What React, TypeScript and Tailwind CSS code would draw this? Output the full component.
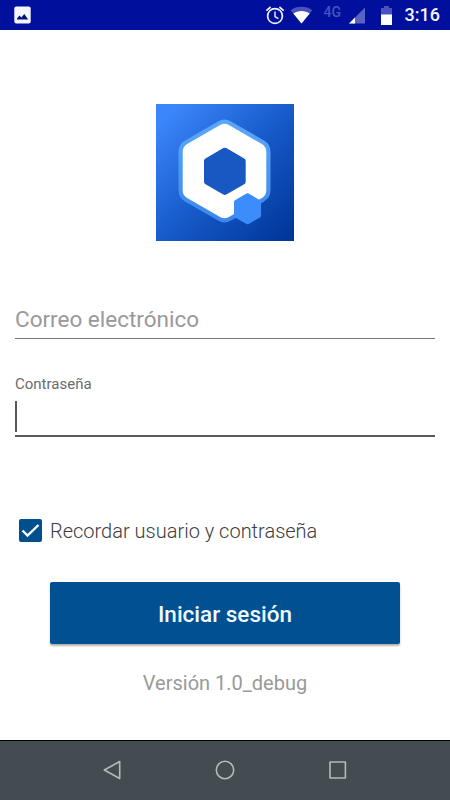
import { useState } from "react";

function StatusBar() {
  return (
    <header className="flex h-[30px] items-center bg-[#000f9c] pl-[14px] pr-[10px]">
      <svg className="h-[18px] w-[17px]" viewBox="0 0 17 18">
        <rect x="0.3" y="0.5" width="16.4" height="17" rx="2" fill="#f4f5ff" />
        <path d="M3 13.5v-1l2.5-3 1.8 2 3-3.5 3.9 5.5z" fill="#000f80" />
      </svg>

      <div className="ml-auto flex items-center">
        {/* Alarm */}
        <svg className="h-5 w-5" viewBox="0 0 20 20" fill="none" stroke="#f1f2ff" strokeWidth="1.7">
          <circle cx="10" cy="11" r="7.4" />
          <path d="M10 6.5v5l3.4 2.2" strokeWidth="1.4" />
          <path d="M1.4 5.6l4.2-3.6M18.6 5.6l-4.2-3.6" />
        </svg>
        {/* Wi-Fi */}
        <svg className="ml-[5px] h-[18px] w-[23px]" viewBox="0 0 23 18">
          <path d="M11.5 17.5L.6 4.2C6.5-.3 16.5-.3 22.4 4.2z" fill="#4a52bf" />
          <path d="M11.5 17.5L3.3 7.5C8 4 15 4 19.7 7.5z" fill="#fff" />
        </svg>
        <span className="ml-[11px] -mt-[7px] w-[20px] text-[14px] font-medium leading-4 text-[#4a52bf]">4G</span>
        {/* Signal */}
        <svg className="ml-[5px] h-[17px] w-4" viewBox="0 0 16 17">
          <path d="M0 16.5L16 .5v16z" fill="#5a62c4" />
          <path d="M0 16.5l6-6v6z" fill="#fff" />
        </svg>
        {/* Battery */}
        <svg className="ml-[16px] h-[19px] w-[11px]" viewBox="0 0 11 19">
          <path d="M0 2h3V0h5v2h3v7H0z" fill="#4a52bf" />
          <path d="M0 8.5h11V19H0z" fill="#fff" />
        </svg>
        <span className="ml-[13px] text-[18px] font-medium leading-5 text-[#f4f5ff]">3:16</span>
      </div>
    </header>
  );
}

function Logo() {
  return (
    <svg className="mx-auto h-[137px] w-[138px]" viewBox="0 0 138 137" strokeLinejoin="round">
      <defs>
        <linearGradient id="tile" x1="0" y1="0" x2="1" y2="1">
          <stop offset="0.08" stopColor="#3b86fa" />
          <stop offset="0.5" stopColor="#185bcb" />
          <stop offset="0.95" stopColor="#00389a" />
        </linearGradient>
        <linearGradient id="rim" gradientUnits="userSpaceOnUse" x1="0" y1="16" x2="0" y2="118">
          <stop stopColor="#5ba8f9" />
          <stop offset="1" stopColor="#3d87ec" />
        </linearGradient>
      </defs>
      <rect width="138" height="137" fill="url(#tile)" />
      <path
        d="M68.5 28.7L101.5 47.7V86.3L68.5 105.3L35.5 86.3V47.7Z"
        fill="url(#rim)"
        stroke="url(#rim)"
        strokeWidth="26"
      />
      <path
        d="M68.5 28.7L101.5 47.7V86.3L68.5 105.3L35.5 86.3V47.7Z"
        fill="#fff"
        stroke="#fff"
        strokeWidth="17.6"
      />
      <path
        d="M68.8 46.7L86.7 57V77.7L68.8 88L51 77.7V57Z"
        fill="#1758c2"
        stroke="#1758c2"
        strokeWidth="6"
      />
      <path
        d="M91.5 91.3L103 97.9V111.7L91.5 118.3L80 111.7V97.9Z"
        fill="#3c8cfb"
        stroke="#3c8cfb"
        strokeWidth="4"
      />
    </svg>
  );
}

function NavigationBar() {
  return (
    <nav className="flex h-[60px] items-center justify-center gap-[93px] border-t border-black bg-[#434c51] pb-[2px]">
      <button aria-label="Atrás">
        <svg className="h-5 w-5" viewBox="0 0 20 20" fill="none" stroke="#b3b9bd" strokeWidth="1.6" strokeLinejoin="round">
          <path d="M2.3 10L17.7 1.5v17z" />
        </svg>
      </button>
      <button aria-label="Inicio">
        <svg className="h-5 w-5" viewBox="0 0 20 20" fill="none" stroke="#b3b9bd" strokeWidth="1.6">
          <circle cx="10" cy="10" r="8.7" />
        </svg>
      </button>
      <button aria-label="Recientes">
        <svg className="h-5 w-5" viewBox="0 0 20 20" fill="none" stroke="#b3b9bd" strokeWidth="1.6" strokeLinejoin="round">
          <rect x="2" y="2" width="15.4" height="16" />
        </svg>
      </button>
    </nav>
  );
}

export default function App() {
  const [remember, setRemember] = useState(true);

  return (
    <div className="flex h-[800px] w-[450px] flex-col overflow-hidden bg-white font-['Roboto',sans-serif]">
      <StatusBar />

      <main className="flex flex-1 flex-col px-[15px] pt-[74px]">
        <Logo />

        <div className="mt-[61px] flex h-[37px] items-center border-b border-[#777] pb-[2px]">
          <span className="text-[22.5px] leading-8 text-[#999]">Correo electrónico</span>
        </div>

        <label className="mt-[35px] text-[15px] leading-5 text-[#6b6b6b]">Contraseña</label>
        <div className="mt-[7px] h-[36px] border-b-2 border-[#5c5759]">
          <div className="h-[31px] w-[2px] bg-[#57575a]" />
        </div>

        <button
          className="mt-[78px] flex h-[32px] items-center pl-[4px] text-left"
          onClick={() => setRemember(!remember)}
        >
          <svg className="mb-px h-[23px] w-[23px]" viewBox="0 0 23 23">
            <rect width="23" height="23" rx="2" fill="#00508f" />
            {remember && <path d="M3.5 11.5l5 5L19.5 6" fill="none" stroke="#fff" strokeWidth="2.4" />}
          </svg>
          <span className="ml-[8px] text-[20px] font-light leading-8 text-[#3c3c3c]">Recordar usuario y contraseña</span>
        </button>

        <button className="mx-[35px] mt-[35px] h-[62px] rounded-[2px] bg-[#005092] pt-[2px] text-[22.5px] font-medium leading-8 text-[#eefaff] shadow-[0_2px_2px_rgba(0,0,0,0.3)]">
          Iniciar sesión
        </button>

        <p className="mt-[23px] text-center text-[20px] leading-8 text-[#999]">Versión 1.0_debug</p>
      </main>

      <NavigationBar />
    </div>
  );
}
